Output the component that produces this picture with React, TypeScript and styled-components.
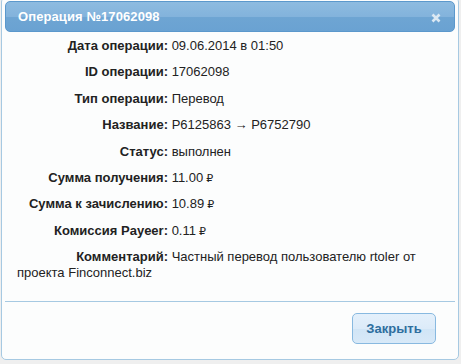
import styled, { createGlobalStyle } from 'styled-components'

const Global = createGlobalStyle`
  html, body {
    margin: 0;
    padding: 0;
    background: #efefef;
  }
  body {
    font-family: 'Liberation Sans', Arial, sans-serif;
    font-size: 13px;
    color: #222;
  }
`

const Dialog = styled.div`
  width: 450px;
  margin: -3px 0 0 1px;
  padding: 3px;
  border: 1px solid #a6c9e2;
  border-radius: 5px;
  background: #fcfdfd;
`

const TitleBar = styled.div`
  display: flex;
  align-items: center;
  justify-content: space-between;
  height: 29px;
  padding: 0 13px 0 12px;
  border: 1px solid #5b98cc;
  border-radius: 5px;
  background: linear-gradient(to bottom, #8dbbe0 0%, #83b3dc 50%, #6ea5d3 52%, #6aa2d2 100%);
  color: #fff;
  font-weight: bold;
  font-size: 13px;
`

const Title = styled.span`
  letter-spacing: 0.1px;
`

const Close = styled.span`
  display: flex;
  width: 10px;
  height: 10px;
  margin-top: 3px;
`

const Content = styled.div`
  padding: 6px 14px 10px 12px;
`

const Row = styled.div`
  line-height: 16px;
  margin-bottom: 10.4px;
  color: #222;
  &:last-child {
    margin-bottom: 10px;
  }
`

const Label = styled.span`
  display: inline-block;
  width: 151px;
  text-align: right;
  font-weight: bold;
`

const Rub = styled.span`
  font-family: 'DejaVu Sans', sans-serif;
  font-size: 11px;
  line-height: 0;
  margin-left: 3px;
`

const Footer = styled.div`
  display: flex;
  justify-content: flex-end;
  border-top: 1px solid #a6c9e2;
  padding: 11px 19px 12px 0;
`

const Button = styled.button`
  width: 84px;
  height: 31px;
  border: 1px solid #88b9e0;
  border-radius: 5px;
  background: linear-gradient(to bottom, #e4f0fb 0%, #dcebf9 50%, #d1e5f6 52%, #d8e9f8 100%);
  color: #2e6e9e;
  font-family: 'Liberation Sans', Arial, sans-serif;
  font-weight: bold;
  font-size: 13px;
  padding: 0;
`

const rows: [string, React.ReactNode][] = [
  ['Дата операции:', '09.06.2014 в 01:50'],
  ['ID операции:', '17062098'],
  ['Тип операции:', 'Перевод'],
  ['Название:', 'P6125863 → P6752790'],
  ['Статус:', 'выполнен'],
  ['Сумма получения:', <>11.00<Rub>₽</Rub></>],
  ['Сумма к зачислению:', <>10.89<Rub>₽</Rub></>],
  ['Комиссия Payeer:', <>0.11<Rub>₽</Rub></>],
  ['Комментарий:', 'Частный перевод пользователю rtoler от проекта Finconnect.biz'],
]

export default function App() {
  return (
    <>
      <Global />
      <Dialog>
        <TitleBar>
          <Title>Операция №17062098</Title>
          <Close>
            <svg width="10" height="10" viewBox="0 0 10 10">
              <path d="M1.5 1.5 L8.5 8.5 M8.5 1.5 L1.5 8.5" stroke="#dbe8f3" strokeWidth="2.6" />
            </svg>
          </Close>
        </TitleBar>
        <Content>
          {rows.map(([label, value]) => (
            <Row key={label}>
              <Label>{label}</Label> {value}
            </Row>
          ))}
        </Content>
        <Footer>
          <Button>Закрыть</Button>
        </Footer>
      </Dialog>
    </>
  )
}
